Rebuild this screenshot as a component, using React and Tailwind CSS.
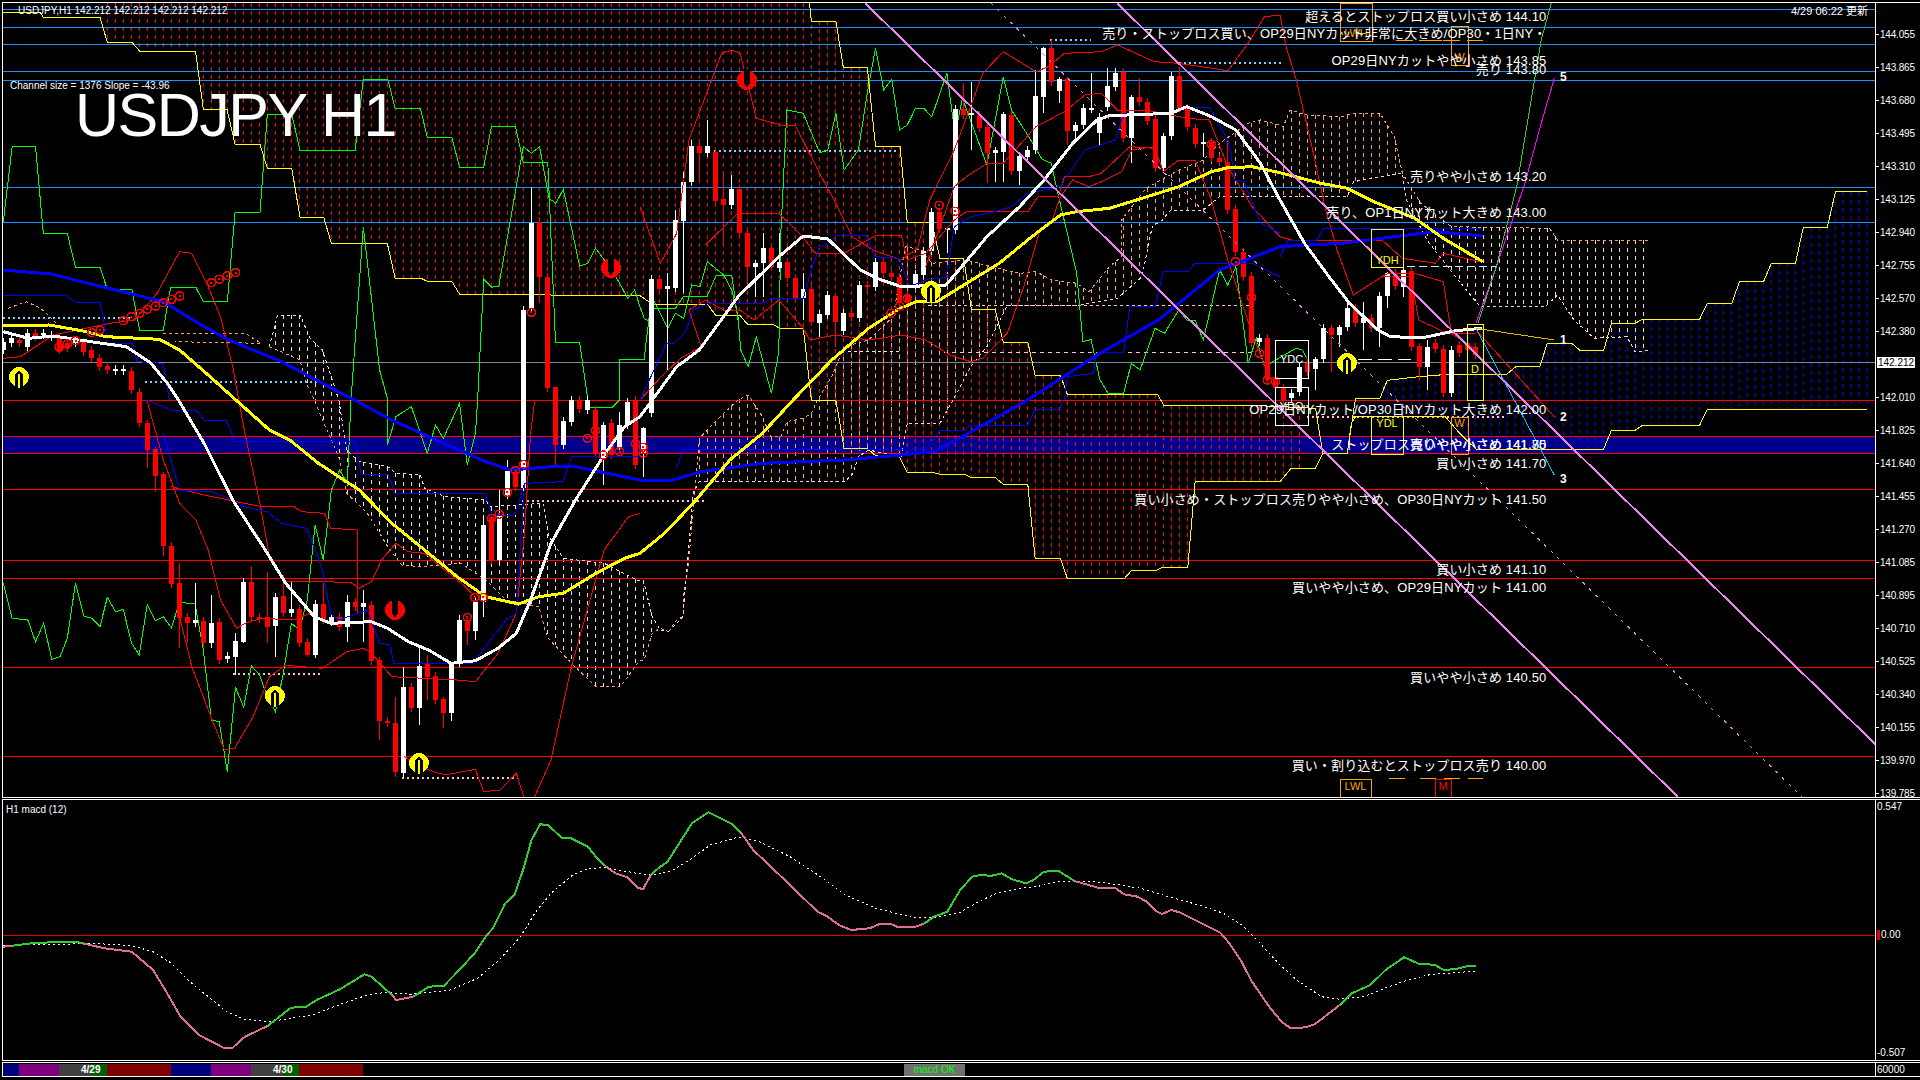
import React from "react";

// chart points were read off crops of the chart, so each series says which crop it came from
const crop = (ox, oy, sx = 2.45) => (list) => {
  const out = [];
  for (let i = 0; i < list.length; i += 2) out.push([ox + list[i] / sx, oy + list[i + 1] / 3]);
  return out;
};
const a = crop(0, 0);
const b = crop(640, 0);
const c = crop(1280, 0);
const d = crop(0, 400);
const e = crop(640, 400);
const f = crop(1280, 300);
const m1 = crop(0, 780, 1.633);
const m2 = crop(960, 780, 1.633);

const toStr = (pts) => pts.map((p) => p[0].toFixed(1) + "," + p[1].toFixed(1)).join(" ");

const yAt = (pts, x) => {
  if (x <= pts[0][0]) return pts[0][1];
  for (let i = 1; i < pts.length; i++) {
    if (x <= pts[i][0]) {
      const t = (x - pts[i - 1][0]) / (pts[i][0] - pts[i - 1][0] || 1);
      return pts[i - 1][1] + (pts[i][1] - pts[i - 1][1]) * t;
    }
  }
  return pts[pts.length - 1][1];
};

const Line = ({ pts, color, w = 1, dash }) => (
  <polyline points={toStr(pts)} fill="none" stroke={color} strokeWidth={w} strokeDasharray={dash} />
);

// ichimoku style fill: one dashed vertical per bar
const Cloud = ({ upper, lower, x0, x1, color, split, color2 }) => {
  const lines = [];
  for (let x = 3; x <= x1; x += 8) {
    if (x < x0) continue;
    const y1 = yAt(upper, x);
    const y2 = yAt(lower, x);
    if (Math.abs(y2 - y1) < 3) continue;
    lines.push(
      <line
        key={x}
        x1={x + 0.5}
        x2={x + 0.5}
        y1={Math.min(y1, y2)}
        y2={Math.max(y1, y2)}
        stroke={split && x > split ? color2 : color}
        strokeDasharray="4 4"
      />
    );
  }
  return <g>{lines}</g>;
};

const lineA = [
  ...a([8,37,100,37,106,52,245,52,263,127,323,127,342,153,479,153,498,327,556,327,576,433,637,433,655,505,715,505,735,652,793,652,812,730,949,730,968,834,1030,834,1047,844,1107,844,1126,883,1568,887]),
  ...b([30,912,165,912,185,945,244,945,263,972,325,972,342,985,400,985,420,1200]),
  ...e([480,0,500,145,557,145,575,165,635,170,655,217,715,217,735,223,795,223,810,232,870,232,890,253,950,253,968,475,1030,475,1047,535,1187,535,1205,511,1265,511,1280,502,1342,502,1360,245,1568,245]),
  ...f([27,505,87,505,105,460]),
];
const lineB = [
  ...b([415,8,420,64,480,64,498,202,557,202,577,438,637,438,655,668,715,668,735,776,793,776,812,928,870,928,890,1026,950,1026,968,1126,1030,1126,1047,1183,1268,1183]),
  ...e([1283,16,1500,16]),
  ...f([87,325,105,460]),
];
const blueUpper = [
  ...f([165,460,185,295,245,295,263,241,340,230,400,224,500,225,556,222,578,200,637,198,655,130,715,130,735,151,793,151,812,70,870,70,888,58,1028,58,1047,10,1107,10]),
  ...c([1126,844,1185,844,1204,790,1263,790,1282,682,1341,682,1361,575,1438,575]),
];
const blueLower = f([105,460,165,460,175,370,185,350,405,350,440,400,480,447,793,447,812,391,870,391,888,376,1028,376,1047,328,1438,328]);

const stepGreen = [
  ...a([8,665,30,438,87,438,106,700,165,700,185,802,245,802,263,868,323,868,342,990,400,990,418,862,480,862,498,905,557,905,576,637,637,637,655,343,715,343,735,452,870,452,890,238,950,238,968,325,1030,325,1047,412,1107,412,1126,502,1185,502,1204,380,1263,380,1282,487,1342,487,1361,1027,1420,1027,1440,1200]),
  ...d([1440,22,1500,22,1518,0]),
  ...a([1518,1078,1568,1078]),
  ...b([10,1078,25,925,87,925,107,888,165,888,187,825,225,825,240,960]),
];
const chikou = [
  ...d([8,550,30,655,68,660,87,725,107,670,127,778,147,770,165,715,185,548,205,648,225,655,245,680,263,592,283,635,302,628,322,728,341,765,361,613,381,662,400,650,420,683,440,607,478,612,498,750,518,960,537,965,557,1115,577,862,597,922,616,798,636,825,655,890,675,935,694,820,714,670,733,690,753,600,772,375,792,480,812,270,832,210,851,250,860,0]),
  ...a([890,680,930,1110,950,1200]),
  ...d([949,135,970,50,1008,20,1047,160,1067,75,1086,115,1126,10,1145,195,1165,100,1170,0]),
  ...a([1185,838,1205,862,1222,858,1282,440,1302,460,1322,440,1345,595,1362,610,1380,568,1420,798,1440,790,1459,745,1500,810,1538,895,1555,870,1568,920]),
  ...b([10,955,25,965,35,905,68,985,87,940,107,955,127,855,147,860,165,785,205,825,225,870,240,950,247,1050,265,1100,285,1010,322,1180,340,1055,345,700,360,330,400,340,440,458,460,450,480,340,500,510,535,450,557,280,577,145,597,270,617,238,636,390,655,375,675,325,695,325,715,350,752,220,772,405,790,295,850,495,890,230,910,330,950,405,985,478,1008,490,1020,560,1070,820,1085,1025,1105,1018,1127,1140,1147,1180,1185,1180,1204,1090,1225,1110,1262,985,1285,1000,1320,930,1340,960,1360,960,1380,1020,1420,810,1440,855,1460,800,1490,1090,1510,1015,1530,1100]),
  ...f([10,165,40,145,55,150,65,175]),
];

const redLines = [
  [...a([8,1075,50,1070,130,1005,270,970,330,960,385,880,440,755,470,760,510,860,540,950,570,1100,585,1200]), ...d([600,100,640,330,660,470,700,545,800,545,860,548,880,565,910,545,935,480,970,430,1000,455,1040,460,1090,510,1140,560,1165,590])],
  d([440,650,470,800,520,960,550,1050,575,1045,620,950,660,830,700,795,740,800,790,805,850,755,890,745,910,760,960,830,1040,835,1120,840,1165,845,1220,760,1265,640,1285,400,1300,100,1310,0]),
  d([360,0,400,180,440,310,480,360,510,450,540,600,580,685,600,670,640,655,720,660,760,640,800,670]),
  d([420,260,500,285,640,320,720,320,740,335,795,340,810,385,875,390,875,640]),
  d([990,1070,1050,1110,1090,1125,1165,1108,1185,1175,1225,1170,1265,1120,1285,1195]),
  d([1310,1190,1350,1080,1400,800,1480,450,1540,350,1568,340]),
  b([0,1200,60,1120,100,1075,150,1040,120,930,160,900,205,930,245,930,280,960,340,900,400,985,415,1020,480,1005,560,1020,640,1005,700,1020,760,1065,810,1085,840,1075,900,1000,940,860,980,690,1010,660,1030,590,1060,540,1100,560,1140,540,1180,515,1205,450,1260,440,1282,515,1320,480,1360,480,1400,600,1440,780,1500,1000,1540,1130]),
  [...b([0,620,50,790,90,700,120,420,200,160,225,150,245,160,285,355,345,375,380,375,440,520,480,610,520,710,570,750,640,780,680,745,710,600,770,450,840,220,890,155,970,215,1000,200,1040,160,1130,155,1170,135,1260,185,1320,190,1440,212,1490,130,1530,50,1568,45]), ...c([15,140,40,240,80,450,110,620,140,750,180,885,250,830,320,830,340,960,410,1000,480,1000])],
  b([160,735,240,640,340,640,395,705,430,760,500,760,580,705,640,705,655,780,700,760,770,660,800,635,950,635,975,590,1025,590,1040,530,1100,530,1130,520,1200,440,1260,445]),
  b([700,800,770,560,800,530,850,490,890,490,970,380,1040,335,1090,285,1130,280,1170,330,1240,330,1280,340,1340,355,1395,360,1440,500,1500,620,1568,710]),
  c([0,710,30,720,250,720,300,775,380,790,400,760,490,785]),
  c([180,885,250,830,265,820,330,820,400,845,420,1000,480,1050]),
];
const blueThin = [
  a([8,887,160,885,185,907,245,907,265,1030,325,1030,335,1085,400,1090,415,1200]),
  d([360,0,420,30,480,30,500,60,555,60,575,125,870,125,885,222,950,222,968,280,1190,280,1205,345,1262,345,1285,250,1380,245,1400,170,1568,170]),
  d([400,100,440,270,520,275,560,295,600,320,655,335,690,370,750,385,770,440,790,510,810,640,830,660,900,630,930,730,955,735,965,790,1160,790,1180,755,1240,660,1265,640,1285,250]),
  b([0,1200,65,1030,85,1030,110,1000,130,930,165,912,300,910,320,897,400,895,420,810,440,740,460,730,480,705,555,708,575,770,636,775,660,860,700,840,750,832,770,680,810,650,860,638,910,620,950,580,1030,560,1090,450,1165,420,1185,340,1300,340,1340,322,1395,322,1440,420,1460,540,1480,545,1520,670,1568,700]),
  c([0,770,20,720,90,720,107,685,497,685]),
  e([90,205,105,148,700,150,735,90,795,90,810,75,950,75,968,28,1030,28,1035,0]),
  b([1040,1200,1047,1130,1110,1120,1120,1058,1185,1058,1200,920,1262,920,1282,815,1342,815,1360,790,1500,790,1568,830]),
];
const blueMA = [
  ...a([8,810,125,822,250,860,400,905,480,965,560,1020,690,1085,860,1195]),
  ...d([960,60,1060,115,1180,180,1250,210,1350,200,1410,200,1568,240]),
  ...e([80,240,150,215,300,190,500,180,640,165,720,155,790,110,950,0]),
  ...b([1120,1065,1270,960,1420,810,1568,740]),
  ...c([150,730,270,712,380,695,497,708]),
];
const whiteMA = [
  ...a([8,995,70,1015,130,1008,240,1028,310,1040,370,1090,410,1150,437,1200]),
  ...d([500,130,570,300,650,450,700,550,770,650,810,670,910,665,950,685,1000,725,1050,750,1105,790,1165,782,1220,745,1265,700,1300,600,1350,430,1410,300,1480,165,1530,80,1568,50]),
  ...b([90,1100,145,1050,240,890,340,770,400,708,460,717,540,810,580,835,640,860,750,855,795,790,850,710,930,620,990,540,1060,430,1120,360,1150,347,1300,340,1340,320,1400,350,1460,390,1520,490,1568,600]),
  ...c([60,730,120,830,170,910,240,990,270,1010,350,1013,430,992,495,985]),
];
const yellowMA = [
  ...a([8,978,120,975,200,992,260,1010,390,1018,440,1050,510,1125,578,1200]),
  ...d([660,90,710,120,780,190,880,270,960,370,1050,460,1120,530,1190,590,1270,612,1320,590,1380,580,1460,520,1530,475,1568,460]),
  ...e([60,400,130,310,220,180,300,100,375,0]),
  ...b([470,1080,560,985,630,930,680,903,730,903,800,850,880,790,960,710,1030,645,1070,635,1150,625,1230,595,1320,560,1400,515,1440,503,1500,500,1568,518]),
  ...c([100,550,165,565,230,605,330,655,400,715,497,785]),
];

const paleUpper = [
  ...a([660,1040,680,945,735,945,760,1015,790,1050,830,1200]),
  ...d([850,150,880,185,950,200,970,220,1030,225,1040,265,1090,290,1190,300,1200,320,1330,310,1345,410,1380,475,1480,490,1560,540]),
  ...e([8,540,30,650,50,690,70,695]),
];
const paleLower = [
  ...a([660,1040,735,1080,750,1150,770,1200]),
  ...d([790,60,830,170,850,280,900,340,950,440,985,495,1030,500,1130,490,1190,540,1240,600,1320,620,1340,710,1400,790,1460,860,1520,860,1568,780]),
  ...e([10,780,30,700,50,685,70,695]),
];
const orangeUpper = [
  ...e([70,695,90,660,105,650,108,570,118,500,130,330,140,200,145,115,165,90,205,40,240,0,265,-15,300,50,320,110,345,110,360,65,400,55,420,40,435,0]),
  ...b([470,1130,500,1040,560,1020,620,950,650,740,690,750,715,790,800,780,860,800,930,820,970,815,1010,840,1070,850,1100,875,1150,800,1180,770,1180,660,1240,565,1320,510,1380,480,1420,430,1490,370,1520,360,1568,375]),
  ...c([8,380,25,330,65,345,150,350,180,340,245,340,280,410,300,520,310,540,345,610,420,680,660,685,680,720,910,720]),
];
const orangeLower = [
  ...e([70,695,105,650,130,280,145,245,500,245,520,225,535,170,560,150,640,170,655,70,735,70,765,5]),
  ...b([810,1100,850,1040,900,915,1080,915,1170,895,1230,830,1255,680,1280,660,1300,630,1380,630,1420,590,1568,590]),
  ...c([165,590,180,545,300,520,310,600,360,720,430,830,490,920,650,920,680,885,720,960,770,1015,850,1010,870,1055,910,1050]),
];

// [x, top, bottom, colour, wickTop, wickBottom], y is in crop units
const candlesA = [[3,1025,1050,"w"],[11,1015,1030,"w"],[19,1020,1030,"r"],[27,998,1040,"w"],[35,998,1010,"r"],[43,1000,1005,"w"],[51,1005,1012,"w"],[59,1010,1050,"r"],[67,1030,1045,"r"],[75,1020,1030,"w"],[83,1025,1055,"r"],[91,1050,1075,"r"],[99,1075,1100,"r"],[107,1098,1110,"r"],[115,1108,1112,"w"],[123,1108,1112,"w"],[131,1112,1170,"r"],[531,668,925,"w",560],[539,665,832,"r",650,910],[547,832,1163,"r"]];
const candlesD = [[139,-25,70,"r"],[147,70,150,"r",60,205],[155,148,228,"r",140,275],[163,222,437,"r",215,467],[171,437,552,"r"],[179,550,655,"r",490,745],[187,652,668,"r",640,730],[195,660,668,"w",550],[203,662,728,"r"],[211,668,728,"w",585,745],[219,665,780,"r"],[227,768,778,"w"],[235,722,770,"w",700,825],[243,545,725,"w",535,730],[251,545,652,"r",497],[259,652,656,"r"],[267,652,680,"r",515,730],[275,590,678,"w",580,770],[283,588,640,"r",525],[291,628,638,"w",545],[299,628,728,"r"],[307,725,765,"r",715,772],[315,612,765,"w",600,775],[323,612,660,"r",550],[331,650,665,"w"],[339,650,682,"r"],[347,605,680,"w",585,725],[355,605,620,"r"],[363,610,620,"w",570,725],[371,615,782,"r"],[379,780,962,"r",770,1020],[387,962,968,"r"],[395,968,1115,"r",890,1130],[403,860,1118,"w",800],[411,860,925,"r"],[419,797,925,"w",735,975],[427,790,830,"r",765,900],[435,828,900,"r"],[443,898,938,"r",890,985],[451,788,938,"w",785,962],[459,660,788,"w",645],[467,660,692,"r",650,735],[475,605,692,"w",595,720],[483,375,605,"w",345,650],[491,350,480,"r"],[499,345,480,"w",270],[507,212,285,"w",180],[515,215,260,"r"],[523,-270,265,"w"],[555,-38,135,"r",-40,205],[563,63,135,"w"],[571,0,65,"w"],[579,0,28,"r"],[587,0,30,"w"],[595,30,160,"r"],[603,75,175,"w",65,255],[611,70,165,"r"],[619,75,140,"w",35,150],[627,5,75,"w"],[635,0,195,"r"]];
const candlesB = [[643,1285,1360,"w",1280,1430],[651,838,1240,"w"],[659,838,868,"r"],[667,858,868,"w",820,1110],[675,660,865,"w",630],[683,545,662,"w",515,880],[691,438,545,"w",420],[699,438,460,"r",430,550],[707,438,458,"w",360],[715,455,602,"r"],[723,598,614,"r",520,730],[731,568,614,"w",525],[739,568,700,"r"],[747,700,800,"r",690,870],[755,790,800,"w",780,890],[763,745,788,"w",700,890],[771,745,800,"r"],[779,785,805,"w",700],[787,785,835,"r"],[795,835,895,"r"],[803,868,895,"w",820,960],[811,868,965,"r"],[819,942,968,"w",930,1010],[827,885,945,"w"],[835,888,965,"r",880,1040],[843,940,992,"w"],[851,940,952,"r"],[859,855,955,"w"],[867,855,860,"r"],[875,785,860,"w"],[883,785,820,"r"],[891,818,830,"r"],[899,832,905,"r"],[907,885,905,"r"],[915,822,855,"w"],[923,752,825,"w"],[931,636,752,"w"],[939,636,688,"r"],[947,685,690,"w",680,760],[955,327,690,"w"],[963,327,345,"r",250],[971,340,343,"w",245,450],[979,345,385,"r"],[987,380,460,"r",370,550],[995,450,460,"w",440,545],[1003,342,455,"w",335,545],[1011,345,512,"r"],[1019,468,512,"w",460,555],[1027,450,470,"w"],[1035,288,450,"w",210],[1043,145,290,"w",140,340],[1051,145,245,"r",120],[1059,238,272,"w",230,310],[1067,238,392,"r",230,435],[1075,375,392,"w",365,425],[1083,323,375,"w"],[1091,325,328,"w",220],[1099,352,400,"w",340,435],[1107,258,320,"w",205],[1115,220,262,"w",205],[1123,215,413,"r"],[1131,290,413,"w",285,490],[1139,292,305,"r",235],[1147,305,362,"r"],[1155,358,503,"r"],[1163,408,503,"w",400,520],[1171,228,408,"w",215],[1179,228,325,"r",200],[1187,325,382,"r"],[1195,385,433,"r"],[1203,425,433,"w",400,470],[1211,425,475,"r"],[1219,475,487,"r"],[1227,487,630,"r",430],[1235,628,755,"r"],[1243,755,830,"r"],[1251,828,1030,"r"],[1259,1015,1025,"w"],[1267,1015,1140,"r"],[1275,1135,1165,"r"]];
const candlesC = [[1283,1165,1200,"r"],[1291,1180,1195,"w"],[1299,1100,1175,"w"],[1307,1090,1115,"r"],[1315,1078,1108,"w",1070,1170],[1323,985,1078,"w"],[1331,985,1005,"r",975,1115],[1339,980,1005,"w",975,1040],[1347,925,980,"w",895],[1355,925,968,"r"],[1363,955,968,"w",905,1050],[1371,955,985,"r"],[1379,888,985,"w",875,1040],[1387,820,888,"w",815,925],[1395,820,858,"r"],[1403,810,860,"w",805,890],[1411,812,1040,"r"],[1419,1038,1100,"r",1030,1140],[1427,1040,1100,"w",1020,1170],[1435,1030,1048,"r"],[1443,1048,1180,"r"],[1451,1050,1180,"w"],[1459,1035,1060,"r"],[1467,1030,1050,"r"],[1475,1040,1065,"r"]];

const Candles = ({ list, base }) => (
  <g>
    {list.map(([x, t, bt, col, wt, wb]) => {
      const top = base + t / 3;
      const bot = base + bt / 3;
      const fill = col === "r" ? "#ff0000" : "#ffffff";
      return (
        <g key={x}>
          <rect x={x} y={base + (wt ?? t - 12) / 3} width={1} height={Math.max(((wb ?? bt + 12) - (wt ?? t - 12)) / 3, 1)} fill={fill} />
          <rect x={x - 2} y={top} width={5} height={Math.max(bot - top, 2)} fill={fill} />
        </g>
      );
    })}
  </g>
);

const bulls = [
  ...a([518,848,537,838,557,827,577,818,302,962,322,950,342,940,361,928,381,918,400,908,420,898,440,888,145,1042,165,1032,185,1022,225,998,245,990,1302,937]),
  ...b([615,940,636,918,655,895,733,616,772,634,1459,785,1498,892,1518,1060,1400,433,1537,1140,1557,1145]),
  ...d([1145,652,1163,592,1184,592,1204,355,1223,343,1243,277,1263,212,1283,193,1439,115,1459,92,1478,165,1518,155,1557,130]),
  ...e([8,142,8,160]),
];

const ArrowUp = ({ x, y, color }) => (
  <g>
    <circle cx={x} cy={y} r={10} fill={color} />
    <polygon points={`${x},${y - 7} ${x - 4},${y - 2} ${x - 4},${y + 11} ${x + 4},${y + 11} ${x + 4},${y - 2}`} fill="#000" />
    <rect x={x - 1} y={y - 3} width={2} height={14} fill={color} />
  </g>
);
const ArrowDown = ({ x, y }) => (
  <g>
    <circle cx={x} cy={y} r={10} fill="#ff0000" />
    <polygon points={`${x - 3},${y - 11} ${x + 3},${y - 11} ${x + 3},${y + 3} ${x},${y + 8} ${x - 3},${y + 3}`} fill="#000" />
  </g>
);

const labels = [
  [16, "超えるとストップロス買い小さめ 144.10"],
  [33, "売り・ストップロス買い、OP29日NYカット非常に大きめ/OP30・1日NY・"],
  [60, "OP29日NYカットやや小さめ 143.85"],
  [69, "売り 143.80"],
  [176, "売りやや小さめ 143.20"],
  [212, "売り、OP1日NYカット大きめ 143.00"],
  [409, "OP29日NYカット/OP30日NYカット大きめ 142.00"],
  [444, "ストップロス売りやや小さめ 141.80"],
  [444, "買いやや小さめ 141.75"],
  [463, "買い小さめ 141.70"],
  [499, "買い小さめ・ストップロス売りやや小さめ、OP30日NYカット 141.50"],
  [569, "買い小さめ 141.10"],
  [587, "買いやや小さめ、OP29日NYカット 141.00"],
  [677, "買いやや小さめ 140.50"],
  [765, "買い・割り込むとストップロス売り 140.00"],
];

const boxes = [
  { x: 1340, y: 3, w: 32, h: 38, color: "#ffa500", text: "LWH", ty: 33 },
  { x: 1451, y: 26, w: 17, h: 39, color: "#ffa500", text: "W", ty: 57 },
  { x: 1371, y: 229, w: 32, h: 38, color: "#ffff00", text: "YDH", ty: 260 },
  { x: 1467, y: 324, w: 16, h: 76, color: "#ffff00", text: "D", ty: 369 },
  { x: 1275, y: 340, w: 33, h: 38, color: "#ffffff", text: "YDC", ty: 359 },
  { x: 1275, y: 387, w: 33, h: 38, color: "#ffffff", text: "YDO", ty: 406 },
  { x: 1371, y: 416, w: 32, h: 38, color: "#ffff00", text: "YDL", ty: 423 },
  { x: 1451, y: 417, w: 17, h: 37, color: "#ffa500", text: "W", ty: 423 },
  { x: 1340, y: 779, w: 31, h: 18, color: "#ffa500", text: "LWL", ty: 786 },
  { x: 1435, y: 779, w: 16, h: 18, color: "#ff0000", text: "M", ty: 786 },
];

const macdParts = [
  ["#db7093", m1([5,500,20,497])],
  ["#32cd32", m1([20,497,60,488,125,486,135,490])],
  ["#db7093", m1([135,490,170,505,215,515,250,570,270,630,295,710,325,765,365,803,380,803,400,770,437,738])],
  ["#32cd32", m1([437,738,475,683,500,680,517,660,555,628,595,583,607,590,640,645])],
  ["#db7093", m1([640,645,647,660,675,650])],
  ["#32cd32", m1([675,650,700,620,725,617,750,570,775,520,795,465,805,445,825,370,840,345,855,265,868,180,882,133,895,135,918,175,933,175,960,200,975,235,990,260])],
  ["#db7093", m1([990,260,1005,280,1025,292,1040,322,1050,328,1063,285])],
  ["#32cd32", m1([1063,285,1075,265,1090,245,1130,130,1157,97,1195,132,1210,158])],
  ["#db7093", m1([1210,158,1230,210,1290,315,1335,395,1350,408,1370,435,1390,450,1420,445,1435,433,1455,432,1465,440,1495,440,1510,430])],
  ["#32cd32", [...m1([1510,430,1525,410,1547,395,1568,330]), ...m2([20,290,35,284,50,288,68,280,85,298,108,310,120,300,137,275,160,272,187,303])]],
  ["#db7093", m2([187,303,225,323,253,323,268,343,290,350,305,365,320,393,330,402,345,390,360,398,425,458,440,490,460,545,475,600,505,680,525,725,540,745,565,742,580,732,620,675])],
  ["#32cd32", m2([620,675,640,640,670,615,695,570,725,532,750,552,775,554,790,570,810,567,830,558,842,558])],
];
const macdSignal = [
  ...m1([5,497,60,493,120,492,150,490,215,497,250,515,280,550,310,605,340,650,370,695,400,718,440,725,510,705,560,670,600,645,630,637,670,643,735,630,780,595,815,540,850,470,875,395,900,340,935,285,960,267,985,262,1040,280,1060,285,1095,275,1130,235,1160,195,1205,172,1240,185,1290,230,1340,290,1380,345,1430,385,1490,412,1530,412,1568,397]),
  ...m2([30,365,60,340,100,325,130,318,165,303,210,303,250,312,295,325,340,350,390,375,430,400,460,435,490,490,520,550,550,600,590,650,620,658,660,650,700,620,735,598,770,583,810,578,842,573]),
];

const prices = ["144.055","143.865","143.680","143.495","143.310","143.125","142.940","142.755","142.570","142.380","","142.010","141.825","141.640","141.455","141.270","141.085","140.895","140.710","140.525","140.340","140.155","139.970","139.785"];

const MainChart = () => (
  <svg viewBox="3 3 1872 794" width={1872} height={794} shapeRendering="crispEdges" className="block">
    <rect x={3} y={436} width={1872} height={17} fill="#00008c" />

    <Cloud upper={[[100, 3], [808, 3], ...lineB]} lower={lineA} x0={100} x1={1300} color="#ff0000" />
    <Cloud upper={blueUpper} lower={blueLower} x0={1330} x1={1868} color="#0000ff" />
    <Cloud upper={paleUpper} lower={paleLower} x0={272} x1={665} color="#f3dcdc" />
    <Cloud upper={orangeUpper} lower={orangeLower} x0={690} x1={1650} color="#f4a460" split={1410} color2="#fbd5dc" />

    {[9, 27, 44, 71, 80, 187, 222].map((y) => (
      <rect key={y} x={3} y={y} width={1872} height={1} fill="#1e90ff" />
    ))}
    {[400, 436, 453, 489, 560, 578, 667, 756].map((y) => (
      <rect key={y} x={3} y={y} width={1872} height={1} fill="#ff0000" />
    ))}
    <rect x={3} y={362} width={1872} height={1} fill="#778899" />

    <Line pts={paleUpper} color="#f3dcdc" dash="3 3" />
    <Line pts={paleLower} color="#f4a460" dash="3 3" />
    <Line pts={orangeUpper} color="#f4a460" dash="3 3" />
    <Line pts={orangeLower} color="#fbd5dc" dash="3 3" />
    <Line pts={a([20,925,65,905,100,925,130,960,150,985])} color="#f4a460" dash="3 3" />
    <Line pts={a([400,1000,600,1000,640,1030,430,1025])} color="#f4a460" dash="3 3" />

    {/* dotted day high / low markers */}
    <Line pts={a([8,955,320,955])} color="#87cefa" dash="2 3" w={2} />
    <Line pts={a([355,1145,790,1145])} color="#87cefa" dash="2 3" w={2} />
    <Line pts={b([180,453,635,453])} color="#87cefa" dash="2 3" w={2} />
    <Line pts={b([1005,120,1105,120])} color="#87cefa" dash="2 3" w={2} />
    <Line pts={[...b([1320,190,1568,190]), ...c([10,190])]} color="#87cefa" dash="2 3" w={2} />
    <Line pts={b([705,917,1500,917])} color="#ffc0cb" dash="3 3" w={1} />
    <Line pts={b([510,1055,635,1055])} color="#fbe4e4" dash="3 3" w={1} />
    <Line pts={b([745,1057,1500,1057])} color="#ffc0cb" dash="4 4" />
    <Line pts={d([570,822,790,822])} color="#ffc0cb" dash="2 3" w={2} />
    <Line pts={d([985,1133,1260,1133])} color="#ffc0cb" dash="2 3" w={2} />
    <Line pts={[...d([1280,302,1568,302]), ...e([165,302])]} color="#ffc0cb" dash="2 3" w={2} />
    <Line pts={c([310,800,530,800])} color="#bfefff" dash="8 4" />
    <Line pts={c([190,1078,320,1078])} color="#ffffff" dash="14 6" />
    <Line pts={f([65,350,550,350])} color="#ffc0cb" dash="2 3" w={2} />

    <Line pts={lineA} color="#ffff00" />
    <Line pts={lineB} color="#ffff00" />
    <Line pts={blueUpper} color="#ffff00" />
    <Line pts={blueLower} color="#ffff00" />
    <Line pts={stepGreen} color="#00ff00" />
    <Line pts={chikou} color="#00ff00" />

    <Candles list={candlesA} base={0} />
    <Candles list={candlesD} base={400} />
    <Candles list={candlesB} base={0} />
    <Candles list={candlesC} base={0} />

    {redLines.map((pts, i) => (
      <Line key={i} pts={pts} color="#ff0000" />
    ))}
    {blueThin.map((pts, i) => (
      <Line key={i} pts={pts} color="#0000ff" />
    ))}
    <Line pts={blueMA} color="#0000ff" w={3} />
    <Line pts={yellowMA} color="#ffff00" w={3} />
    <Line pts={whiteMA} color="#ffffff" w={3} />

    {/* channel */}
    <line x1={865} y1={3} x2={1678} y2={797} stroke="#ee82ee" strokeWidth={2} />
    <line x1={1117} y1={3} x2={1875} y2={744} stroke="#ee82ee" strokeWidth={2} />
    <line x1={991} y1={3} x2={1802} y2={797} stroke="#ee82ee" strokeDasharray="3 6" />

    {/* projections */}
    <Line pts={c([480,985,672,1020])} color="#e6b400" />
    <Line pts={f([480,90,672,350])} color="#ff0000" />
    <Line pts={f([480,85,672,525])} color="#00bfff" />
    <Line pts={c([480,970,530,800,600,550,640,370,672,235])} color="#ff00ff" />
    <Line pts={c([485,970,530,800,580,560,640,120,665,8])} color="#32cd32" />

    {bulls.map((p, i) => (
      <g key={i}>
        <circle cx={p[0]} cy={p[1]} r={4} fill="none" stroke="#ff0000" strokeWidth={1.5} />
        <rect x={p[0] - 1} y={p[1] - 1} width={2} height={2} fill="#ff0000" />
      </g>
    ))}

    <ArrowUp x={19} y={377} color="#ffff00" />
    <ArrowUp x={275} y={696} color="#ffff00" />
    <ArrowUp x={419} y={763} color="#ffff00" />
    <ArrowUp x={931} y={291} color="#ffff00" />
    <ArrowUp x={1347} y={363} color="#ffff00" />
    <ArrowDown x={611} y={268} />
    <ArrowDown x={395} y={610} />
    <ArrowDown x={747} y={80} />

    {boxes.map((box) => (
      <g key={box.x + "-" + box.y}>
        <rect x={box.x + 0.5} y={box.y + 0.5} width={box.w} height={box.h} fill="none" stroke={box.color} />
        <text x={box.x + box.w / 2} y={box.ty + 4} textAnchor="middle" fill={box.color} className="text-[11px]">
          {box.text}
        </text>
      </g>
    ))}
    <Line pts={c([283,122,325,122])} color="#ffa500" />
    <Line pts={c([340,122,398,122])} color="#ffa500" />
    <Line pts={c([400,122,440,122])} color="#ffa500" />
    <Line pts={c([458,122,497,122])} color="#ffa500" />
    <Line pts={f([268,1436,325,1436])} color="#ffa500" dash="16 8" />
    <Line pts={f([342,1436,497,1436])} color="#ffa500" dash="16 8" />
    <Line pts={f([180,350,400,350])} color="#ffff00" />

    {labels.map(([y, text], i) => (
      <text key={i} x={1546.5} y={y + 5} textAnchor="end" fill="#fff" className="text-[13px] tracking-[0.15px]">
        {text}
      </text>
    ))}

    <text x={1560} y={81} fill="#fff" className="text-[12px] font-bold">5</text>
    <text x={1560} y={344} fill="#fff" className="text-[12px] font-bold">1</text>
    <text x={1560} y={421} fill="#fff" className="text-[12px] font-bold">2</text>
    <text x={1560} y=
{483} fill="#fff" className="text-[12px] font-bold">3</text>

    <text x={18} y={14} fill="#fff" className="text-[10px]">USDJPY,H1  142.212 142.212 142.212 142.212</text>
    <text x={10} y={89} fill="#fff" className="text-[10px]">Channel size = 1376 Slope = -43.96</text>
    <text x={75} y={136} fill="#fff" className="text-[61px] tracking-[-1.5px]">USDJPY H1</text>
    <text x={1868} y={15} textAnchor="end" fill="#fff" className="text-[11px]">4/29 06:22 更新</text>
  </svg>
);

const MacdChart = () => (
  <svg viewBox="3 800 1872 260" width={1872} height={260} shapeRendering="crispEdges" className="block">
    <rect x={3} y={935} width={1872} height={1} fill="#e00000" />
    <Line pts={macdSignal} color="#ffffff" dash="2 3" />
    {macdParts.map(([color, pts], i) => (
      <Line key={i} pts={pts} color={color} w={2} />
    ))}
    <text x={6} y={813} fill="#fff" className="text-[10px]">H1 macd (12)</text>
  </svg>
);

const AxisTick = ({ label }) => (
  <div className="h-[33px] flex items-center gap-[1px]">
    <div className={label ? "w-[3px] h-px bg-white" : "w-[3px] h-px"} />
    <span className="text-[10px] leading-none text-white tracking-[-0.2px]">{label}</span>
  </div>
);

export default function App() {
  return (
    <div className="w-[1920px] h-[1080px] bg-black overflow-hidden pt-[2px] pl-[2px] text-white font-['Liberation_Sans','Noto_Sans_CJK_JP',sans-serif]">
      {/* price panel */}
      <div className="flex border-y border-white h-[796px]">
        <div className="border-l border-white w-[1873px] h-[794px] shrink-0">
          <MainChart />
        </div>
        <div className="relative flex-1 border-l border-white pt-[15px] overflow-hidden">
          {prices.map((p, i) => (
            <AxisTick key={i} label={p} />
          ))}
          <div className="absolute left-[1px] top-[354px] w-[38px] h-[11px] bg-white text-black text-[10px] leading-[11px] text-center">
            142.212
          </div>
        </div>
      </div>

      {/* macd panel */}
      <div className="mt-px flex border-y border-white h-[262px]">
        <div className="border-l border-white w-[1873px] h-[260px] shrink-0">
          <MacdChart />
        </div>
        <div className="flex-1 border-l border-white flex flex-col pl-[1px] text-[10px] leading-[12px]">
          <span className="mt-px">0.547</span>
          <div className="mt-[116px] flex items-center">
            <div className="w-[3px] h-[10px] bg-red-600" />
            <span className="ml-px">0.00</span>
          </div>
          <span className="mt-[106px]">-0.507</span>
        </div>
      </div>

      {/* period separator / status strip */}
      <div className="mt-px flex border-y border-white h-[15px]">
        <div className="relative border-l border-white w-[1873px] h-[13px] shrink-0 flex pt-px">
          <div className="w-[16px] bg-[#00007e]" />
          <div className="w-[40px] bg-[#7e007e]" />
          <div className="w-[32px] bg-[#404040]" />
          <div className="w-[16px] bg-[#006000]" />
          <div className="w-[64px] bg-[#7e0000]" />
          <div className="w-[40px] bg-[#00007e]" />
          <div className="w-[40px] bg-[#7e007e]" />
          <div className="w-[32px] bg-[#404040]" />
          <div className="w-[16px] bg-[#006000]" />
          <div className="w-[64px] bg-[#7e0000]" />
          <div className="ml-[541px] w-[61px] bg-[#707070] text-[#00ff00] text-[10px] leading-[12px] text-center">macd OK</div>
          <span className="absolute left-[78px] top-0 text-[10px] font-bold leading-[13px]">4/29</span>
          <span className="absolute left-[270px] top-0 text-[10px] font-bold leading-[13px]">4/30</span>
        </div>
        <div className="flex-1 border-l border-white pl-[1px] text-[10px] leading-[13px]">60000</div>
      </div>
    </div>
  );
}
